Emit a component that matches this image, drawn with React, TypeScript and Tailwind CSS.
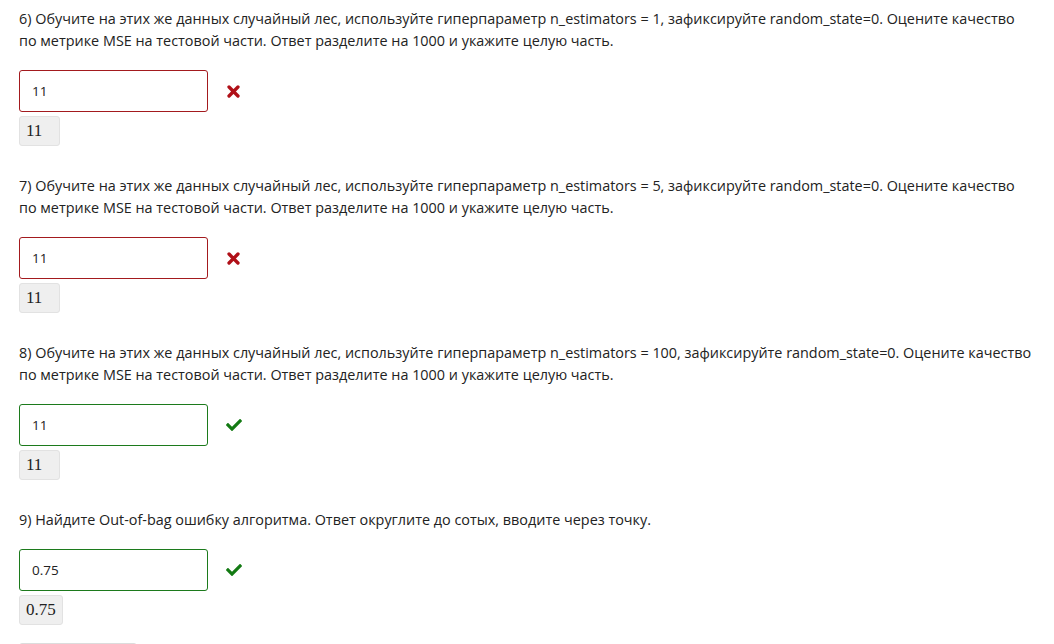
import { FaCheck } from "react-icons/fa";

interface QuestionProps {
  text: string;
  value: string;
  correct: boolean;
  answer: string;
}

const Cross = () => (
  <svg viewBox="0 0 14 14" className="ml-[19px] w-[13px] h-[13px]">
    <path d="M2.2 2.2 L11.8 11.8 M11.8 2.2 L2.2 11.8" stroke="#b01018" strokeWidth="3.6" strokeLinecap="round" />
  </svg>
);

const Question = ({ text, value, correct, answer }: QuestionProps) => {
  return (
    <div className="pt-2 pb-[21px]">
      <p className="text-[14.4px] leading-[22px] text-[#222]">{text}</p>
      <div className="flex items-center mt-[18px]">
        <div
          className={
            correct
              ? "w-[189px] h-[42px] border border-[#1c7a1c] rounded-[3px] flex items-center px-3 text-[13.5px] text-[#222]"
              : "w-[189px] h-[42px] border border-[#a31a1e] rounded-[3px] flex items-center px-3 text-[13.5px] text-[#222]"
          }
        >
          {value}
        </div>
        {correct ? <FaCheck className="ml-[18px] text-[#137a13] w-[16px] h-[16px]" /> : <Cross />}
      </div>
      <div className="mt-[4px] flex w-fit min-w-[41px] h-[30px] items-center px-[6px] bg-[#efefef] border border-[#e2e2e2] rounded-[3px] text-[17px] text-[#222] [font-family:'Liberation_Serif','DejaVu_Serif',serif]">
        {answer}
      </div>
    </div>
  );
};

const questions: QuestionProps[] = [
  {
    text: "6) Обучите на этих же данных случайный лес, используйте гиперпараметр n_estimators = 1, зафиксируйте random_state=0. Оцените качество по метрике MSE на тестовой части. Ответ разделите на 1000 и укажите целую часть.",
    value: "11",
    correct: false,
    answer: "11",
  },
  {
    text: "7) Обучите на этих же данных случайный лес, используйте гиперпараметр n_estimators = 5, зафиксируйте random_state=0. Оцените качество по метрике MSE на тестовой части. Ответ разделите на 1000 и укажите целую часть.",
    value: "11",
    correct: false,
    answer: "11",
  },
  {
    text: "8) Обучите на этих же данных случайный лес, используйте гиперпараметр n_estimators = 100, зафиксируйте random_state=0. Оцените качество по метрике MSE на тестовой части. Ответ разделите на 1000 и укажите целую часть.",
    value: "11",
    correct: true,
    answer: "11",
  },
  {
    text: "9) Найдите Out-of-bag ошибку алгоритма. Ответ округлите до сотых, вводите через точку.",
    value: "0.75",
    correct: true,
    answer: "0.75",
  },
];

export default function App() {
  return (
    <div className="w-[1054px] h-[644px] overflow-hidden bg-white pl-[19px] pr-[20px] [font-family:'Open_Sans','Noto_Sans',sans-serif]">
      {questions.map((q) => (
        <Question key={q.text} {...q} />
      ))}
      <div className="w-[118px] h-[30px] border border-[#dcdcdc] rounded-[3px] -mt-[3px]" />
    </div>
  );
}
